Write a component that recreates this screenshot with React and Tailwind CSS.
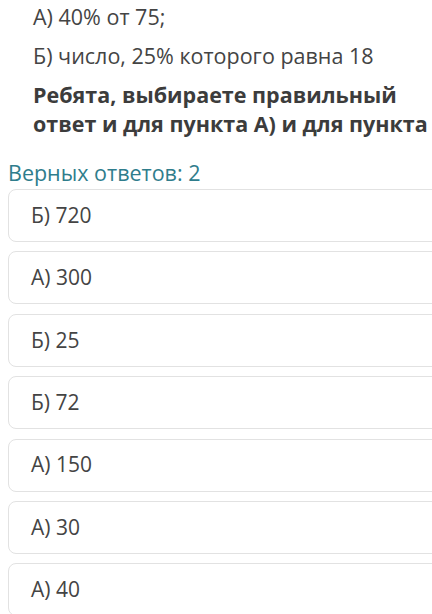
const answers = ['Б) 720', 'А) 300', 'Б) 25', 'Б) 72', 'А) 150', 'А) 30', 'А) 40'];

export default function App() {
  return (
    <div className="h-[614px] overflow-hidden bg-white font-['Open_Sans',sans-serif] text-[#444]">
      <div className="pl-[33px] pt-[3px]">
        <p className="text-[21.5px] leading-[28px]">А) 40% от 75;</p>
        <p className="mt-[11px] text-[21.5px] leading-[28px]">Б) число, 25% которого равна 18</p>
        <p className="mt-[10px] whitespace-nowrap text-[21.5px] font-bold leading-[29px] text-[#3c3c3c]">
          Ребята, выбираете правильный
          <br />
          ответ и для пункта А) и для пункта
        </p>
      </div>
      <div className="mt-[22px] pl-[8px] text-[21.5px] leading-[26px] text-[#2f7d8c]">Верных ответов: 2</div>
      <div className="mt-[3px] flex flex-col gap-[9.4px] pl-[8px]">
        {answers.map((a, i) => (
          <div
            key={i}
            className="-mr-[20px] flex h-[53px] shrink-0 items-center rounded-[8px] border border-[#e2e2e2] pl-[22px] text-[21px] text-[#444]"
          >
            {a}
          </div>
        ))}
      </div>
    </div>
  );
}
